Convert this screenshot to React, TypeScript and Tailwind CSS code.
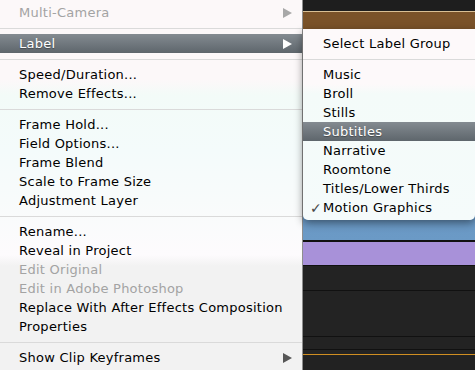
import type { ReactNode } from "react";

type Item = {
  label: string;
  disabled?: boolean;
  active?: boolean;
  submenu?: boolean;
  checked?: boolean;
};

const MAIN: (Item | "sep")[] = [
  { label: "Multi-Camera", disabled: true, submenu: true },
  "sep",
  { label: "Label", active: true, submenu: true },
  "sep",
  { label: "Speed/Duration..." },
  { label: "Remove Effects..." },
  "sep",
  { label: "Frame Hold..." },
  { label: "Field Options..." },
  { label: "Frame Blend" },
  { label: "Scale to Frame Size" },
  { label: "Adjustment Layer" },
  "sep",
  { label: "Rename..." },
  { label: "Reveal in Project" },
  { label: "Edit Original", disabled: true },
  { label: "Edit in Adobe Photoshop", disabled: true },
  { label: "Replace With After Effects Composition" },
  { label: "Properties" },
  "sep",
  { label: "Show Clip Keyframes", submenu: true },
];

const LABELS: (Item | "sep")[] = [
  { label: "Select Label Group" },
  "sep",
  { label: "Music" },
  { label: "Broll" },
  { label: "Stills" },
  { label: "Subtitles", active: true },
  { label: "Narrative" },
  { label: "Roomtone" },
  { label: "Titles/Lower Thirds" },
  { label: "Motion Graphics", checked: true },
];

function Arrow({ color }: { color: string }) {
  return (
    <svg width="9" height="10" viewBox="0 0 9 10" className="shrink-0">
      <polygon points="0,0 9,5 0,10" fill={color} />
    </svg>
  );
}

function Separator() {
  return (
    <div className="h-[12px] pt-[6px]">
      <div className="h-px bg-[#dadada]" />
    </div>
  );
}

function Row({ item, indent }: { item: Item; indent: string }): ReactNode {
  const text = item.active
    ? "text-white [text-shadow:0_1px_1px_rgba(0,0,0,0.35)]"
    : item.disabled
      ? "text-[#a3a3a3]"
      : "text-black";
  const arrow = item.active ? "#ffffff" : item.disabled ? "#a8a8a8" : "#575757";
  return (
    <div
      className={`relative flex h-[19px] items-center ${indent} pr-[10px] ${
        item.active ? "bg-gradient-to-b from-[#848b91] to-[#5e666c]" : ""
      }`}
    >
      {item.checked && (
        <span className="absolute left-[7px] text-[14px] text-[#474747]">✓</span>
      )}
      <span className={`flex-1 whitespace-nowrap ${text}`}>{item.label}</span>
      {item.submenu && <Arrow color={arrow} />}
    </div>
  );
}

export default function App() {
  return (
    <div className="flex h-[370px] w-[475px] overflow-hidden bg-[#222222] text-[13px] leading-none tracking-[0.25px] [font-family:'DejaVu_Sans',sans-serif]">
      <div className="w-[303px] shrink-0 border-r border-[#8e8e8e] bg-[linear-gradient(to_bottom,#fcf8f9_0px,#fcf8f9_80px,#f3fbf8_95px,#f4fbfb_150px,#f8fbfb_200px,#fdfbfd_255px,#f2f2f2_266px,#f2f2f2_370px)] pt-[3px]">
        {MAIN.map((m, i) =>
          m === "sep" ? <Separator key={i} /> : <Row key={i} item={m} indent="pl-[19px]" />
        )}
      </div>

      <div className="relative flex-1">
        <div className="h-[11px] bg-[#1e1e1e]" />
        <div className="h-px bg-[#d9bf95]" />
        <div className="h-[17px] bg-[#7a5229]" />
        <div className="h-[211px] bg-gradient-to-b from-[#5d88b4] to-[#6b9ac6]" />
        <div className="h-[2px] bg-[#111111]" />
        <div className="h-[23px] bg-[#a891d9]" />
        <div className="h-px bg-[#111111]" />
        <div className="h-[24px] bg-[#232323]" />
        <div className="h-px bg-[#111111]" />
        <div className="h-[45px] bg-[#232323]" />
        <div className="h-px bg-[#111111]" />
        <div className="h-[12px] bg-[#232323]" />
        <div className="h-px bg-[#111111]" />
        <div className="h-[4px] bg-[#232323]" />
        <div className="h-px bg-[#d08e22]" />

        <div className="absolute left-0 right-0 top-[29px] h-[191px] rounded-b-[5px] bg-[linear-gradient(to_bottom,#fdf9fa_0px,#fdf9fa_55px,#f4fbf9_65px,#f5fbfb_191px)] pt-[5px] shadow-[0_3px_8px_rgba(0,0,0,0.45)]">
          {LABELS.map((m, i) =>
            m === "sep" ? <Separator key={i} /> : <Row key={i} item={m} indent="pl-[20px]" />
          )}
        </div>
      </div>
    </div>
  );
}
